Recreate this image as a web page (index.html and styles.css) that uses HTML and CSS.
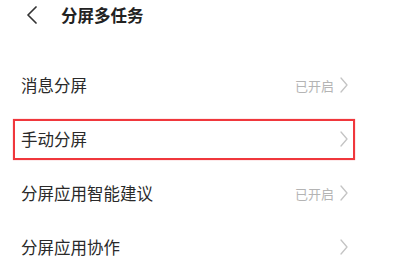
FILE: index.html
```html
<!DOCTYPE html>
<html lang="zh-CN">
<head>
<meta charset="utf-8">
<link rel="stylesheet" href="styles.css">
</head>
<body>
<div class="screen">
  <header class="topbar">
    <svg class="back" width="12" height="18" viewBox="0 0 12 18"><polyline points="10,1 2,9 10,17" fill="none" stroke="#333" stroke-width="1.7" stroke-linecap="round" stroke-linejoin="round"/></svg>
    <span class="title">分屏多任务</span>
  </header>
  <ul class="list">
    <li class="row"><span class="label">消息分屏</span><span class="meta"><span class="status">已开启</span><svg class="chev" width="8" height="16" viewBox="0 0 8 16"><polyline points="1,1 7,8 1,15" fill="none" stroke="#c4c4c4" stroke-width="1.3" stroke-linecap="round" stroke-linejoin="round"/></svg></span></li>
    <li class="row highlight"><span class="label">手动分屏</span><span class="meta"><svg class="chev" width="8" height="16" viewBox="0 0 8 16"><polyline points="1,1 7,8 1,15" fill="none" stroke="#c4c4c4" stroke-width="1.3" stroke-linecap="round" stroke-linejoin="round"/></svg></span></li>
    <li class="row"><span class="label">分屏应用智能建议</span><span class="meta"><span class="status">已开启</span><svg class="chev" width="8" height="16" viewBox="0 0 8 16"><polyline points="1,1 7,8 1,15" fill="none" stroke="#c4c4c4" stroke-width="1.3" stroke-linecap="round" stroke-linejoin="round"/></svg></span></li>
    <li class="row"><span class="label">分屏应用协作</span><span class="meta"><svg class="chev" width="8" height="16" viewBox="0 0 8 16"><polyline points="1,1 7,8 1,15" fill="none" stroke="#c4c4c4" stroke-width="1.3" stroke-linecap="round" stroke-linejoin="round"/></svg></span></li>
  </ul>
</div>
</body>
</html>
```
FILE: styles.css
```css
html, body {
  margin: 0;
  padding: 0;
  background: #fff;
}
body {
  font-family: "Noto Sans CJK SC", "Noto Sans", sans-serif;
  color: #333;
}
.screen {
  width: 394px;
  height: 259px;
  overflow: hidden;
}
.topbar {
  height: 30px;
  display: flex;
  align-items: center;
  padding-left: 26px;
}
.back {
  display: block;
}
.title {
  margin-left: 23px;
  font-size: 16.5px;
  font-weight: bold;
  color: #222;
  line-height: 1;
}
.list {
  list-style: none;
  margin: 28px 0 0 13px;
  padding: 0;
  width: 342px;
}
.row {
  position: relative;
  height: 54px;
  display: flex;
  align-items: center;
  justify-content: space-between;
  padding: 0 7px 0 8px;
}
.label {
  font-size: 16.5px;
  color: #2a2a2a;
  line-height: 1;
}
.meta {
  display: flex;
  align-items: center;
}
.status {
  font-size: 13px;
  color: #b4b4b4;
  margin-right: 6px;
  line-height: 1;
}
.chev {
  display: block;
}
.highlight::after {
  content: "";
  position: absolute;
  left: 0;
  right: 0;
  top: 7px;
  bottom: 6px;
  border: 2px solid #f0373c;
  box-shadow: 0 0 1px rgba(240, 55, 60, 0.6);
  pointer-events: none;
}
```
